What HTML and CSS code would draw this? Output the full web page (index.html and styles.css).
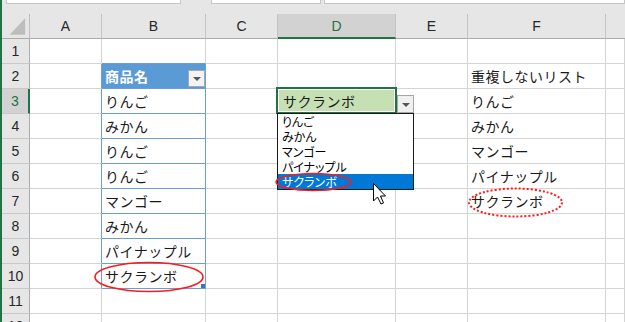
FILE: index.html
```
<!DOCTYPE html>
<html lang="ja">
<head>
<meta charset="utf-8">
<link rel="stylesheet" href="styles.css">
</head>
<body>
<div class="app">
  <div class="toolbar">
    <div class="box b1"></div>
    <div class="box b2"></div>
    <div class="box b3"></div>
  </div>
  <div class="grid">
    <div class="corner"><svg width="28" height="24" viewBox="0 0 28 24"><polygon points="24,4 24,21 8,21" fill="#bdbdbd"/></svg></div>
    <div class="ch">A</div><div class="ch">B</div><div class="ch">C</div><div class="ch sel">D</div><div class="ch">E</div><div class="ch">F</div><div class="ch last"></div>

    <div class="rh">1</div><div class="c"></div><div class="c tb-top"></div><div class="c"></div><div class="c"></div><div class="c"></div><div class="c"></div><div class="c"></div>
    <div class="rh">2</div><div class="c tb-l"></div><div class="c tb th">商品名<span class="filter"><span class="tri"></span></span></div><div class="c"></div><div class="c"></div><div class="c"></div><div class="c">重複しないリスト</div><div class="c"></div>
    <div class="rh sel">3</div><div class="c tb-l"></div><div class="c tb">りんご</div><div class="c"></div><div class="c active">サクランボ</div><div class="c"></div><div class="c">りんご</div><div class="c"></div>
    <div class="rh">4</div><div class="c tb-l"></div><div class="c tb">みかん</div><div class="c"></div><div class="c"></div><div class="c"></div><div class="c">みかん</div><div class="c"></div>
    <div class="rh">5</div><div class="c tb-l"></div><div class="c tb">りんご</div><div class="c"></div><div class="c"></div><div class="c"></div><div class="c">マンゴー</div><div class="c"></div>
    <div class="rh">6</div><div class="c tb-l"></div><div class="c tb">りんご</div><div class="c"></div><div class="c"></div><div class="c"></div><div class="c">パイナップル</div><div class="c"></div>
    <div class="rh">7</div><div class="c tb-l"></div><div class="c tb">マンゴー</div><div class="c"></div><div class="c"></div><div class="c"></div><div class="c">サクランボ</div><div class="c"></div>
    <div class="rh">8</div><div class="c tb-l"></div><div class="c tb">みかん</div><div class="c"></div><div class="c"></div><div class="c"></div><div class="c"></div><div class="c"></div>
    <div class="rh">9</div><div class="c tb-l"></div><div class="c tb">パイナップル</div><div class="c"></div><div class="c"></div><div class="c"></div><div class="c"></div><div class="c"></div>
    <div class="rh">10</div><div class="c tb-l"></div><div class="c tb">サクランボ</div><div class="c"></div><div class="c"></div><div class="c"></div><div class="c"></div><div class="c"></div>
    <div class="rh">11</div><div class="c"></div><div class="c"></div><div class="c"></div><div class="c"></div><div class="c"></div><div class="c"></div><div class="c"></div>
    <div class="rh">12</div><div class="c"></div><div class="c"></div><div class="c"></div><div class="c"></div><div class="c"></div><div class="c"></div><div class="c"></div>
  </div>

  <div class="active-frame"></div>
  <div class="dd-btn"><span class="tri"></span></div>
  <ul class="dd-list">
    <li>りんご</li>
    <li>みかん</li>
    <li>マンゴー</li>
    <li>パイナップル</li>
    <li class="hl">サクランボ</li>
  </ul>
  <div class="handle"></div>

  <svg class="marks" width="625" height="322" viewBox="0 0 625 322">
    <ellipse cx="313.5" cy="182" rx="37.5" ry="8.5" fill="none" stroke="#ff1a1a" stroke-width="1.6"/>
    <ellipse cx="149" cy="277" rx="54" ry="14.5" fill="none" stroke="#ff1a1a" stroke-width="1.6"/>
    <ellipse cx="515.5" cy="202.5" rx="46.5" ry="14" fill="none" stroke="#ff1a1a" stroke-width="2" stroke-dasharray="2 2"/>
    <path d="M373.5 183.5 V201 L377.5 197 L381 204 L383.5 203 L380.5 196 L385.5 196 Z" fill="#fff" stroke="#000" stroke-width="1" stroke-linejoin="miter"/>
  </svg>
</div>
</body>
</html>
```

FILE: styles.css
```
html, body {
  margin: 0;
  padding: 0;
  background: #fff;
}

.app {
  position: relative;
  width: 625px;
  height: 322px;
  overflow: hidden;
  box-sizing: border-box;
  border-left: 2px solid #217346;
  background: #e6e6e6;
  font-family: "Noto Sans CJK JP", sans-serif;
}

.toolbar {
  display: flex;
  height: 14px;
  align-items: flex-start;
}

.box {
  height: 4px;
  box-sizing: border-box;
  background: #fff;
  border: 1px solid #c6c6c6;
  border-top: 0;
}

.b1 { margin-left: 4px; width: 175px; }
.b2 { margin-left: 30px; width: 110px; }
.b3 { margin-left: 3px; flex: 1; }

.grid {
  display: grid;
  grid-template-columns: 28px 72px 104px 72px 118px 72px 138px 1fr;
  grid-auto-rows: 25px;
}

.grid > div {
  box-sizing: border-box;
  display: flex;
  align-items: center;
  white-space: nowrap;
  overflow: hidden;
}

.corner {
  background: #e6e6e6;
  border-right: 1px solid #bfbfbf;
  border-bottom: 1px solid #ababab;
}

.ch {
  justify-content: center;
  background: #e6e6e6;
  border-right: 1px solid #c4c4c4;
  border-bottom: 1px solid #ababab;
  font-family: "Liberation Sans", sans-serif;
  font-size: 14px;
  color: #262626;
}

.ch.last { border-right: 0; }

.ch.sel {
  background: #d2d2d2;
  border-bottom: 2px solid #217346;
  color: #217346;
}

.rh {
  justify-content: center;
  background: #e6e6e6;
  border-right: 1px solid #ababab;
  border-bottom: 1px solid #c8c8c8;
  font-family: "Liberation Sans", sans-serif;
  font-size: 14px;
  color: #262626;
}

.rh.sel {
  background: #d2d2d2;
  border-right: 2px solid #217346;
  color: #217346;
}

.c {
  background: #fff;
  border-right: 1px solid #d4d4d4;
  border-bottom: 1px solid #d4d4d4;
  padding-left: 3px;
  padding-bottom: 1px;
  font-size: 14px;
  letter-spacing: 0.5px;
  color: #1a1a1a;
}

.tb-top { border-bottom-color: #6a9fd6 !important; }
.tb-l { border-right-color: #6a9fd6 !important; }
.tb {
  border-right-color: #6a9fd6 !important;
  border-bottom-color: #6a9fd6 !important;
}

.th {
  position: relative;
  background: #5b9bd5 !important;
  color: #fff;
  font-weight: bold;
}

.filter {
  position: absolute;
  left: 86px;
  top: 6px;
  width: 17px;
  height: 17px;
  box-sizing: border-box;
  background: #f3f3f3;
  border: 1px solid #a8a8a8;
  display: flex;
  align-items: center;
  justify-content: center;
}

.tri {
  width: 0;
  height: 0;
  border-left: 4px solid transparent;
  border-right: 4px solid transparent;
  border-top: 4px solid #555;
  margin-top: 1px;
}

.active {
  background: #c6e0b4 !important;
  padding-left: 5px;
}

.active-frame {
  position: absolute;
  left: 274px;
  top: 87px;
  width: 121px;
  height: 27px;
  box-sizing: border-box;
  border: 2px solid #217346;
  box-shadow: inset 0 0 0 1px #fff;
}

.dd-btn {
  position: absolute;
  left: 395px;
  top: 95px;
  width: 17px;
  height: 18px;
  box-sizing: border-box;
  background: #f0f0f0;
  border: 1px solid #a6a6a6;
  display: flex;
  align-items: center;
  justify-content: center;
}

.dd-list {
  position: absolute;
  left: 275px;
  top: 113px;
  width: 137px;
  margin: 0;
  padding: 0;
  list-style: none;
  box-sizing: border-box;
  background: #fff;
  border: 1px solid #1a1a1a;
  font-size: 12px;
  font-feature-settings: "palt";
  color: #000;
}

.dd-list li {
  height: 15px;
  line-height: 15px;
  padding-left: 4px;
  white-space: nowrap;
  overflow: hidden;
}

.dd-list li.hl {
  background: #0078d7;
  color: #fff;
}

.handle {
  position: absolute;
  left: 199px;
  top: 284px;
  width: 4px;
  height: 4px;
  background: #3f6fbf;
}

.marks {
  position: absolute;
  left: -2px;
  top: 0;
  pointer-events: none;
}
```
